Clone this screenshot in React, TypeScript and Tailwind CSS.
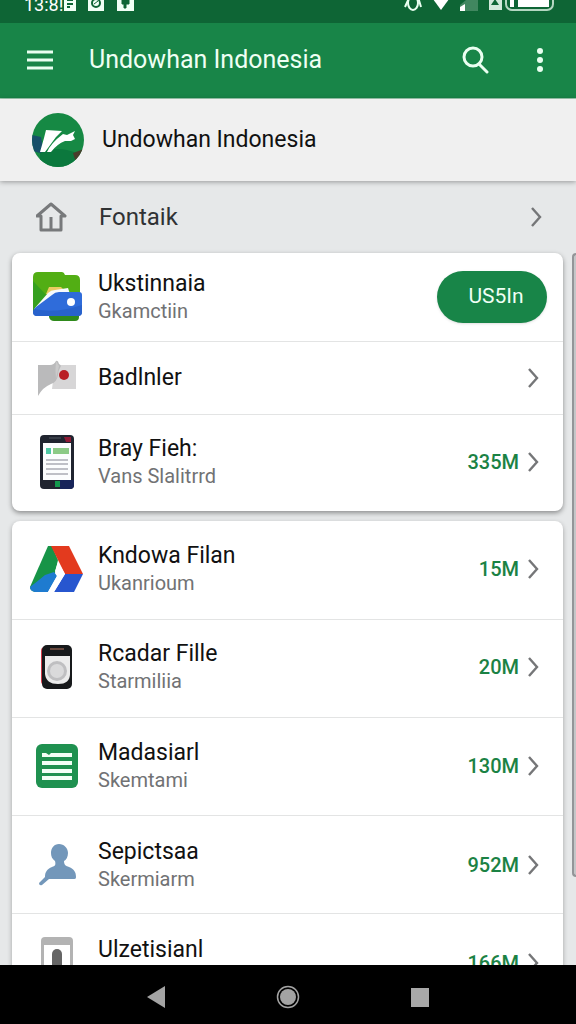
import type { ReactNode } from "react";

type Item = {
  title: string;
  subtitle?: string;
  size?: string;
  icon: ReactNode;
  height: string;
};

const WalletIcon = () => (
  <svg width="50" height="52" viewBox="0 0 50 52">
    <path d="M17 40h30v6q0 4-4 4H22q-4 0-5-4z" fill="#2f8a1c" />
    <path d="M1 6q0-5 5-5h24q2 0 3 3h10q5 0 5 5v30H1z" fill="#52ae14" />
    <path d="M1 10l15 16L1 42z" fill="#35a01f" />
    <path d="M17 16h12l3 3v4H14z" fill="#eacb62" />
    <path d="M2 38l14-16q3-3 7-3l13-2 2 6-18 8z" fill="#f7fafc" />
    <path d="M20 24q3-3 7-3h20q3 0 3 3v17q0 4-4 4H5q-4 0-4-4 0-3 3-5z" fill="#2f6cda" />
    <path d="M1 41q0-2 2-3 20 5 47-4v7q0 4-4 4H5q-4 0-4-4z" fill="#2862cc" />
    <circle cx="39" cy="31" r="4" fill="#fff" />
  </svg>
);

const FlagIcon = () => (
  <svg width="40" height="38" viewBox="0 0 40 38">
    <path d="M18 6h21v24H15z" fill="#d7d6d7" />
    <path d="M1 6h12q4 0 6-4 2-1 3 3 3 1 1 4-2 3-2 7-1 7-7 9-8 3-13 12z" fill="#bababb" />
    <path d="M19 2l3 5-3 13q-1-10 0-18z" fill="#cacaca" />
    <circle cx="27" cy="16" r="5" fill="#b91f24" />
  </svg>
);

const PhoneIcon = () => (
  <svg width="34" height="54" viewBox="0 0 34 54">
    <rect width="34" height="54" rx="4" fill="#20242f" />
    <path d="M20 45h14v5q0 4-4 4H20z" fill="#17245a" />
    <path d="M24 2h7v5h-5z" fill="#8d1b35" />
    <path d="M9 3h12" stroke="#515660" />
    <path d="M3 8h28v37H3z" fill="#fcfdfe" />
    <path d="M6 13h5v6H6z" fill="#4fc8a5" />
    <path d="M13 13h16v6H13z" fill="#8cca86" />
    <path d="M6 25h22M6 29h22M6 34h22M6 39h22" stroke="#bfc0c7" strokeWidth="2" />
    <rect x="15" y="46" width="5" height="6" fill="#13994d" />
  </svg>
);

const DriveIcon = () => (
  <svg width="54" height="48" viewBox="0 0 54 48">
    <path d="M18 1h4l6 14-3 13-12 19H5q-5-1-5-5z" fill="#179447" />
    <path d="M0 42q8-6 15-12l9-3 3 4-9 16H5q-5-1-5-5z" fill="#1e7bd0" />
    <path d="M21 1h18l14 28H35z" fill="#e33a1e" />
    <path d="M35 29h18l-9 18H24z" fill="#2756cf" />
    <path d="M28 17l7 12-11 18h-6l9-16-2-5z" fill="#fff" />
  </svg>
);

const PlayerIcon = () => (
  <svg width="32" height="46" viewBox="0 0 32 46">
    <rect y="3" width="12" height="38" rx="4" fill="#d23b48" />
    <rect x="1" y="1" width="30" height="44" rx="5" fill="#17191b" />
    <path d="M9 5h14" stroke="#b97862" strokeWidth="1" />
    <path d="M4 12h25v18q0 10-12 10T4 30z" fill="#ececec" />
    <circle cx="16" cy="27" r="10" fill="#bfbfc1" />
    <circle cx="16" cy="27" r="7" fill="#dadadb" />
  </svg>
);

const NotesIcon = () => (
  <svg width="44" height="44" viewBox="0 0 44 44">
    <rect x="1" width="42" height="44" rx="6" fill="#1f9150" />
    <path d="M7 11h30M7 19h30M7 27h30M7 34h30" stroke="#f3fff6" strokeWidth="4" />
    <path d="M11 9l3 2 2-2" fill="#1f9150" />
  </svg>
);

const PersonIcon = () => (
  <svg width="38" height="44" viewBox="0 0 38 44">
    <path
      d="M21 1c5 0 9 4 9 9 0 4-2 7-4 8 0 4 2 5 5 6 5 2 7 5 7 10 0 2-1 2-3 2H11l-7 6q-3 1-3-2l6-6c0-5 2-8 7-10 3-1 4-2 3-6-3-2-4-5-4-8 0-5 3-9 8-9z"
      fill="#7397ba"
    />
  </svg>
);

const DeviceIcon = () => (
  <svg width="32" height="52" viewBox="0 0 32 52">
    <rect width="32" height="52" rx="4" fill="#b3b3b3" />
    <path d="M3 8h26v38H3z" fill="#fff" />
    <rect x="11" y="12" width="10" height="30" rx="5" fill="#656565" />
  </svg>
);

const Chevron = () => (
  <svg className="shrink-0" width="12" height="20" viewBox="0 0 12 20" fill="none" stroke="#757678" strokeWidth="2.4">
    <path d="M2 1l8 9-8 9" />
  </svg>
);

const firstItems: Item[] = [
  { title: "Badlnler", icon: <FlagIcon />, height: "h-[72px]" },
  { title: "Bray Fieh:", subtitle: "Vans Slalitrrd", size: "335M", icon: <PhoneIcon />, height: "h-24 pb-0.5" },
];

const secondItems: Item[] = [
  { title: "Kndowa Filan", subtitle: "Ukanrioum", size: "15M", icon: <DriveIcon />, height: "h-[97px] pb-1" },
  { title: "Rcadar Fille", subtitle: "Starmiliia", size: "20M", icon: <PlayerIcon />, height: "h-[97px] pb-1" },
  { title: "Madasiarl", subtitle: "Skemtami", size: "130M", icon: <NotesIcon />, height: "h-[97px] pb-0.5" },
  { title: "Sepictsaa", subtitle: "Skermiarm", size: "952M", icon: <PersonIcon />, height: "h-[97px]" },
  { title: "Ulzetisianl", subtitle: "Slzerriatm", size: "166M", icon: <DeviceIcon />, height: "h-[97px]" },
];

const Labels = ({ title, subtitle }: { title: string; subtitle?: string }) => (
  <span className="min-w-0 flex-1">
    <span className="block text-[23px] leading-7 text-[#111]">{title}</span>
    {subtitle && <span className="block text-[20px] leading-[26px] text-[#717274]">{subtitle}</span>}
  </span>
);

const Row = ({ item }: { item: Item }) => (
  <li className="border-b border-[#e3e4e4] last:border-b-0">
    <a href="#" className={`flex items-center pr-6 pl-4 ${item.height}`}>
      <span className="mr-3 flex w-[58px] shrink-0 justify-center">{item.icon}</span>
      <Labels title={item.title} subtitle={item.subtitle} />
      {item.size && <span className="mr-2 text-[20px] font-medium text-[#1b8244]">{item.size}</span>}
      <Chevron />
    </a>
  </li>
);

const StatusBar = () => (
  <div className="flex h-[23px] shrink-0 items-end justify-between overflow-hidden bg-[#0e6535] pr-5 pb-3 pl-6 text-white">
    <div className="flex items-end">
      <span className="text-[18px] leading-3">13:8!</span>
      <svg width="74" height="16" viewBox="0 0 74 16" fill="#f1fff5">
        <path d="M1 0h12v16H1zM25 0h16v16H25zM54 0h17v16H54z" />
        <path d="M4 5h6M4 9h6M4 12h3" stroke="#0e6535" strokeWidth="2" />
        <circle cx="33" cy="8" r="4" fill="none" stroke="#0e6535" strokeWidth="2" />
        <path d="M31 9l4-3M59 5h7v4h-3v4h-2V9h-2z" stroke="#0e6535" fill="#0e6535" />
      </svg>
    </div>
    <svg width="152" height="16" viewBox="0 0 152 16" fill="none">
      <ellipse cx="9" cy="8" rx="5" ry="7" stroke="#eafff1" strokeWidth="2" />
      <path d="M1 12l4-9M14 2l3 10" stroke="#eafff1" strokeWidth="2" />
      <path d="M26 0h22L37 15z" fill="#fff" />
      <path d="M56 16V10l12-10h6v16z" fill="#418760" />
      <path d="M56 16v-4l5-3v7z" fill="#fff" />
      <path d="M85 0h13v15H85z" fill="#d3e9db" />
      <path d="M87 10l4-6 4 6z" fill="#0e6535" />
      <rect x="102" y="-6" width="47" height="21" rx="6" stroke="#b5d7c2" strokeWidth="2" />
      <path d="M106 2h4v10h-4zM114 2h31v10h-31z" fill="#fff" />
    </svg>
  </div>
);

const App = () => {
  return (
    <div className="flex h-screen flex-col overflow-hidden bg-[#e6e8e9] font-['Roboto',sans-serif]">
      <StatusBar />
      <header className="flex h-[76px] shrink-0 items-center border-b border-[#9fcfb4] bg-[#188548] pr-8 pb-0.5 pl-[26px] text-white">
        <button type="button" aria-label="Menu">
          <svg width="28" height="22" viewBox="0 0 28 22" stroke="#e9fff1" strokeWidth="3">
            <path d="M1 3h26M1 11h26M1 19h26" />
          </svg>
        </button>
        <h1 className="ml-[35px] flex-1 text-[25px] text-[#effff4]">Undowhan Indonesia</h1>
        <button type="button" aria-label="Search">
          <svg width="28" height="28" viewBox="0 0 28 28" fill="none" stroke="#eafff1" strokeWidth="3" strokeLinecap="round">
            <circle cx="11" cy="11" r="9" />
            <path d="M17 18l8 8" />
          </svg>
        </button>
        <button type="button" aria-label="More options" className="ml-[46px]">
          <svg width="8" height="24" viewBox="0 0 8 24" fill="#eafff1">
            <circle cx="4" cy="3" r="3" />
            <circle cx="4" cy="12" r="3" />
            <circle cx="4" cy="21" r="3" />
          </svg>
        </button>
      </header>

      <section className="z-10 flex h-[82px] shrink-0 items-center bg-[#f0f0f0] pl-8 shadow-[0_1px_5px_rgba(0,0,0,0.35)]">
        <svg width="52" height="54" viewBox="0 0 52 54">
          <defs>
            <clipPath id="avatar">
              <ellipse cx="26" cy="27" rx="26" ry="27" />
            </clipPath>
          </defs>
          <g clipPath="url(#avatar)">
            <path d="M0 0h52v54H0z" fill="#168944" />
            <path d="M0 22l9 2 3 17-12-3z" fill="#17506a" />
            <path d="M8 40q18-8 36 0l-2 14H8z" fill="#0b783d" />
            <path d="M41 40l11-4v13l-8 1z" fill="#483d2b" />
            <path d="M14 17l16 1-6 6-11 15H8l4-14z" fill="#fff" />
            <path d="M43 18l-2 4 2 4-4 2h-6q-8 3-14 11h-4q4-9 16-18l4 1z" fill="#fff" />
          </g>
        </svg>
        <h2 className="ml-[18px] text-[23px] text-[#111]">Undowhan Indonesia</h2>
      </section>

      <main className="relative min-h-0 flex-1 overflow-hidden px-3">
        <a href="#" className="flex h-[72px] items-center pr-[22px] pl-6 text-[24px] text-[#303234]">
          <svg className="mr-8" width="31" height="30" viewBox="0 0 31 30" fill="none" stroke="#77797b" strokeWidth="3" strokeLinejoin="round">
            <path d="M1 14L15 2l14 12h-4v14H5V14z" />
            <path d="M15 28V15" />
          </svg>
          <span className="flex-1">Fontaik</span>
          <Chevron />
        </a>

        <ul className="mr-px rounded-lg bg-white shadow-[0_2px_5px_rgba(0,0,0,0.4)]">
          <li className="flex h-[89px] items-center border-b border-[#e3e4e4] pr-4 pl-4">
            <span className="mr-3 flex w-[58px] shrink-0 justify-center">
              <WalletIcon />
            </span>
            <Labels title="Ukstinnaia" subtitle="Gkamctiin" />
            <button type="button" className="h-[52px] w-[110px] rounded-full bg-[#188548] pl-2 text-[21px] text-[#effff4] shadow-sm">
              US5In
            </button>
          </li>
          {firstItems.map((item) => (
            <Row key={item.title} item={item} />
          ))}
        </ul>

        <ul className="mt-[10px] mr-px rounded-lg bg-white pt-px shadow-[0_2px_5px_rgba(0,0,0,0.3)]">
          {secondItems.map((item) => (
            <Row key={item.title} item={item} />
          ))}
        </ul>

        {/* scroll thumb */}
        <div className="absolute top-[72px] right-0 bottom-[88px] w-1 rounded-l-md border-2 border-r-0 border-[#939598] bg-[#c4c6c8]" />
      </main>

      <nav className="flex h-[59px] shrink-0 items-center justify-center gap-[110px] bg-black pt-1">
        <button type="button" aria-label="Back">
          <svg width="20" height="24" viewBox="0 0 20 24" fill="#a3a3a3">
            <path d="M19 1v22L1 12z" />
          </svg>
        </button>
        <button type="button" aria-label="Home">
          <svg width="24" height="24" viewBox="0 0 24 24">
            <circle cx="12" cy="12" r="10.5" fill="none" stroke="#a3a3a3" strokeWidth="1.5" />
            <circle cx="12" cy="12" r="8" fill="#a3a3a3" />
          </svg>
        </button>
        <button type="button" aria-label="Recent apps">
          <svg width="20" height="20" viewBox="0 0 20 20">
            <path d="M1 1h18v19H1z" fill="#a8a8a8" />
          </svg>
        </button>
      </nav>
    </div>
  );
};

export default App;
